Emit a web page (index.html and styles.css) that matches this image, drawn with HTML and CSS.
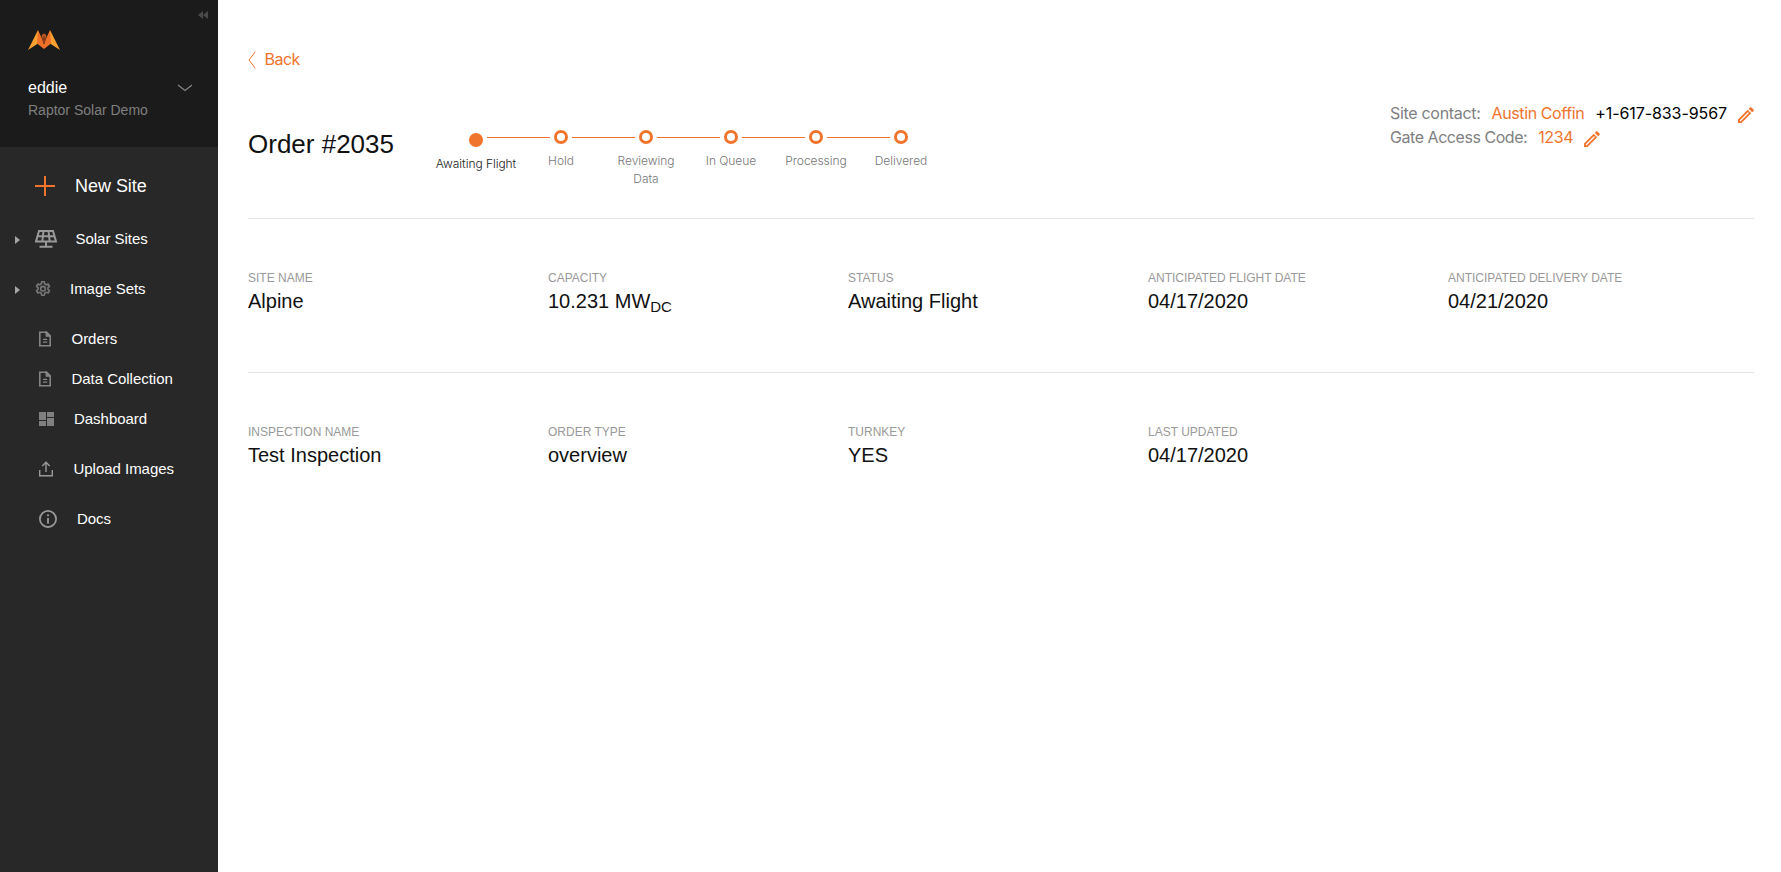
FILE: index.html
```
<!DOCTYPE html>
<html lang="en">
<head>
    <meta charset="UTF-8">
    <meta name="viewport" content="width=device-width, initial-scale=1.0">
    <title>Order #2035</title>
    <link rel="stylesheet" href="styles.css">
</head>
<body>
    <aside class="sidebar">
        <div class="account">
            <svg class="collapse" width="10" height="8" viewBox="0 0 10 8"><path d="M5 0v8L0 4zM10 0v8L5 4z" fill="#4a4a4a"/></svg>
            <svg class="logo" width="32" height="20" viewBox="0 0 32 20">
                <path d="M0 20L10 0v13.500zM32 20L22 0v13.500z" fill="#f9a030"/>
                <path d="M10 0l6 13 6-13 1 13.500-7 5.500-7-5.500z" fill="#f0702a"/>
                <path d="M16 14l-2.200-7.500a2.200 2.700 0 1 1 4.400 0z" fill="#f0702a" stroke="#6b3216" stroke-width=".8"/>
                <path d="M16 5.500v5" stroke="#4b2413" stroke-width="1.200"/>
            </svg>
            <div class="user">
                <span>eddie</span>
                <svg width="16" height="8" viewBox="0 0 16 8"><path d="M1 1l7 5.500L15 1" fill="none" stroke="#888" stroke-width="1.100"/></svg>
            </div>
            <div class="company">Raptor Solar Demo</div>
        </div>
        <nav class="menu">
            <a class="item new-site">
                <svg width="20" height="20" viewBox="0 0 20 20"><path d="M10 0v20M0 10h20" stroke="#f0742c" stroke-width="2"/></svg>
                <span>New Site</span>
            </a>
            <a class="item expandable solar">
                <svg class="arrow" width="5" height="8" viewBox="0 0 5 8"><path d="M0 0l5 4-5 4z" fill="#a5a5a5"/></svg>
                <svg width="22" height="18" viewBox="0 0 22 18">
                    <path d="M4 1h14l3 10.500H1zM2.500 6.200h17M8.500 1L7.300 11.500M13.500 1l1.200 10.500" fill="none" stroke="#999" stroke-width="2"/>
                    <path d="M11 11.500V16M4.500 16.800h13" stroke="#999" stroke-width="2"/>
                </svg>
                <span>Solar Sites</span>
            </a>
            <a class="item expandable images">
                <svg class="arrow" width="5" height="8" viewBox="0 0 5 8"><path d="M0 0l5 4-5 4z" fill="#a5a5a5"/></svg>
                <svg width="16" height="16" viewBox="0 0 16 16" fill="none" stroke="#777" stroke-width="1.600" stroke-linejoin="round">
                    <path d="M6.700.8h2.600l.4 2 1.500.9 2-.7 1.300 2.300-1.600 1.400v1.600l1.600 1.400-1.300 2.300-2-.7-1.500.9-.4 2H6.700l-.4-2-1.500-.9-2 .7-1.300-2.300 1.600-1.400V6.700L1.500 5.300 2.800 3l2 .7 1.500-.9z"/>
                    <circle cx="8" cy="7.700" r="2.300"/>
                </svg>
                <span>Image Sets</span>
            </a>
            <a class="item small orders">
                <svg width="12" height="16" viewBox="0 0 12 16"><path d="M.8 1.200h6.700l3.700 3.700v9.900H.8z" fill="none" stroke="#858585" stroke-width="1.600"/><path d="M7.200.8v4.400h4.400zM4 8.400h4.200M4 11.200h4.200" fill="#858585" stroke="#858585" stroke-width="1.300"/></svg>
                <span>Orders</span>
            </a>
            <a class="item small">
                <svg width="12" height="16" viewBox="0 0 12 16"><path d="M.8 1.200h6.700l3.700 3.700v9.900H.8z" fill="none" stroke="#858585" stroke-width="1.600"/><path d="M7.200.8v4.400h4.400zM4 8.400h4.200M4 11.200h4.200" fill="#858585" stroke="#858585" stroke-width="1.300"/></svg>
                <span>Data Collection</span>
            </a>
            <a class="item small dashboard">
                <svg width="15" height="14" viewBox="0 0 15 14"><path d="M0 0h7v8H0zM8 0h7v5H8zM0 9h7v5H0zM8 6h7v8H8z" fill="#808080"/></svg>
                <span>Dashboard</span>
            </a>
            <a class="item upload">
                <svg width="14" height="16" viewBox="0 0 14 16"><path d="M.7 9v5.800h12.600V9M7 11V1.500M3.300 5L7 1.300 10.700 5" fill="none" stroke="#999" stroke-width="1.400"/></svg>
                <span>Upload Images</span>
            </a>
            <a class="item docs">
                <svg width="18" height="18" viewBox="0 0 18 18"><circle cx="9" cy="9" r="8.100" fill="none" stroke="#999" stroke-width="1.800"/><path d="M9 4.200v2M9 8v5.800" stroke="#999" stroke-width="1.800"/></svg>
                <span>Docs</span>
            </a>
        </nav>
    </aside>

    <main class="content">
        <a class="back">
            <svg width="8" height="18" viewBox="0 0 8 18"><path d="M7.300.7L1 9l6.300 8.300" fill="none" stroke="#f0742c" stroke-width="1"/></svg>
            <span>Back</span>
        </a>

        <header class="order-header">
            <h1>Order #2035</h1>
            <ol class="steps">
                <li class="current">Awaiting Flight</li>
                <li>Hold</li>
                <li>Reviewing Data</li>
                <li>In Queue</li>
                <li>Processing</li>
                <li>Delivered</li>
            </ol>
            <div class="contact">
                <div class="contact-row">
                    <span class="muted">Site contact:</span>
                    <span class="accent name">Austin Coffin</span>
                    <span class="phone">+1-617-833-9567</span>
                    <svg width="16" height="16" viewBox="0 0 16 16"><path d="M0 16v-3.500L9.700 2.800l3.500 3.500L3.500 16zM10.700 1.800l1.300-1.300q.7-.7 1.400 0l2.100 2.100q.7.700 0 1.400l-1.300 1.300z" fill="#f0742c"/><path d="M2 14l8.500-8.500" stroke="#fff" stroke-width="1.300"/></svg>
                </div>
                <div class="contact-row">
                    <span class="muted code-label">Gate Access Code:</span>
                    <span class="accent">1234</span>
                    <svg width="16" height="16" viewBox="0 0 16 16"><path d="M0 16v-3.500L9.700 2.800l3.500 3.500L3.500 16zM10.700 1.800l1.300-1.300q.7-.7 1.400 0l2.100 2.100q.7.700 0 1.400l-1.300 1.300z" fill="#f0742c"/><path d="M2 14l8.500-8.500" stroke="#fff" stroke-width="1.300"/></svg>
                </div>
            </div>
        </header>

        <dl class="details">
            <div><dt>SITE NAME</dt><dd>Alpine</dd></div>
            <div><dt>CAPACITY</dt><dd>10.231 MW<sub>DC</sub></dd></div>
            <div><dt>STATUS</dt><dd>Awaiting Flight</dd></div>
            <div><dt>ANTICIPATED FLIGHT DATE</dt><dd>04/17/2020</dd></div>
            <div><dt>ANTICIPATED DELIVERY DATE</dt><dd>04/21/2020</dd></div>
        </dl>

        <dl class="details">
            <div><dt>INSPECTION NAME</dt><dd>Test Inspection</dd></div>
            <div><dt>ORDER TYPE</dt><dd>overview</dd></div>
            <div><dt>TURNKEY</dt><dd>YES</dd></div>
            <div><dt>LAST UPDATED</dt><dd>04/17/2020</dd></div>
        </dl>
    </main>
</body>
</html>
```
FILE: styles.css
```
*,
*::before,
*::after {
    box-sizing: border-box;
}

body {
    margin: 0;
    display: flex;
    height: 100vh;
    background: #fff;
    color: #111;
    font-family: "Liberation Sans", Arial, sans-serif;
}

svg {
    display: block;
    flex: none;
}

/* sidebar */
.sidebar {
    width: 218px;
    flex: none;
    background: #282828;
    color: #fff;
}

.account {
    height: 147px;
    padding: 11px 10px 0 28px;
    background: #1b1b1b;
}

.collapse {
    margin-left: auto;
}

.logo {
    margin-top: 11px;
}

.user {
    display: flex;
    align-items: center;
    justify-content: space-between;
    height: 24px;
    margin: 26px 15px 0 0;
    font-size: 16px;
}

.company {
    margin-top: 2px;
    font-size: 14px;
    line-height: 16px;
    color: #7f7f7f;
}

.menu {
    padding-top: 11px;
}

.item {
    display: flex;
    align-items: center;
    height: 50px;
    padding-left: 39px;
    font-size: 15px;
    letter-spacing: -0.03px;
}

.item span {
    margin: -1px 0 0 20.5px;
}

.new-site {
    height: 56px;
    padding-left: 35px;
    font-size: 18px;
}

.new-site span {
    margin: 1px 0 0 20px;
}

.expandable {
    padding-left: 15px;
}

.arrow {
    margin: 2px 15px 0 0;
}

.solar span {
    margin-left: 18.5px;
}

.images span {
    margin-left: 19px;
}

.small {
    height: 40px;
}

.orders {
    margin-top: 5px;
}

.dashboard {
    margin-bottom: 5px;
}

.dashboard span,
.docs span {
    margin-left: 20px;
}

/* order page */
.content {
    flex: 1;
    padding: 47px 27px 0 30px;
}

.back {
    display: flex;
    align-items: center;
    gap: 8.5px;
    height: 25px;
    color: #f0742c;
    font: 16px/24px Inter, sans-serif;
    letter-spacing: -0.5px;
}

.back svg {
    margin-top: 1px;
}

.back span {
    margin-top: -1px;
}

.order-header {
    display: flex;
    height: 147px;
    border-bottom: 1px solid #e4e4e4;
}

h1 {
    width: 185px;
    margin: 57px 0 0;
    font-size: 26px;
    font-weight: 400;
    line-height: 30px;
}

.steps {
    display: flex;
    margin: 58px 0 0;
    padding: 0;
    list-style: none;
}

.steps li {
    position: relative;
    width: 86px;
    margin-right: -1px;
    padding: 0 12px;
    font: 300 12px/18px Inter, sans-serif;
    letter-spacing: -0.05px;
    color: #777;
    text-align: center;
}

.steps li::before {
    content: "";
    display: block;
    width: 14px;
    height: 14px;
    margin: 0 auto 8px;
    border: 3px solid #f0742c;
    border-radius: 50%;
}

.steps li::after {
    content: "";
    position: absolute;
    top: 7px;
    left: 54px;
    width: 63px;
    height: 1px;
    background: #f0742c;
}

.steps li:last-child::after {
    display: none;
}

.steps .current {
    padding: 0;
    color: #222;
}

.steps .current::before {
    margin-top: 3px;
    background: #f0742c;
}

.contact {
    margin: 29px 0 0 auto;
    font: 16px/24px Inter, sans-serif;
    letter-spacing: -0.4px;
}

.contact-row {
    display: flex;
    align-items: center;
    height: 24px;
    gap: 11px;
}

.contact-row svg {
    margin-top: 4px;
}

.muted {
    color: #808080;
    letter-spacing: -0.3px;
}

.code-label {
    letter-spacing: -0.45px;
}

.accent {
    color: #f0742c;
}

.phone {
    color: #000;
    letter-spacing: -0.08px;
}

.details {
    display: grid;
    grid-template-columns: repeat(5, 300px);
    height: 153px;
    margin: 0;
    padding-top: 51px;
}

.details + .details {
    border-top: 1px solid #e4e4e4;
}

dt {
    font-size: 12px;
    line-height: 16px;
    color: #999;
}

dd {
    margin: 2px 0 0;
    font-size: 20px;
    line-height: 26px;
}

sub {
    position: relative;
    bottom: -0.25em;
    font-size: 75%;
    line-height: 0;
    vertical-align: baseline;
}
```
